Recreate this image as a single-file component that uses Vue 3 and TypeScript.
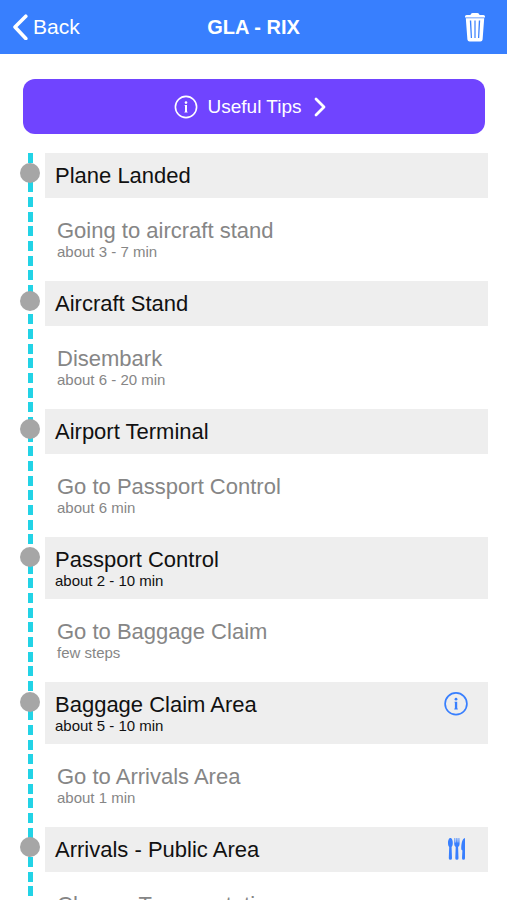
<script setup lang="ts">
interface Step {
  place: string
  wait?: string
  action?: 'info' | 'food'
  next: string
  duration: string
}

const steps: Step[] = [
  { place: 'Plane Landed', next: 'Going to aircraft stand', duration: 'about 3 - 7 min' },
  { place: 'Aircraft Stand', next: 'Disembark', duration: 'about 6 - 20 min' },
  { place: 'Airport Terminal', next: 'Go to Passport Control', duration: 'about 6 min' },
  { place: 'Passport Control', wait: 'about 2 - 10 min', next: 'Go to Baggage Claim', duration: 'few steps' },
  { place: 'Baggage Claim Area', wait: 'about 5 - 10 min', action: 'info', next: 'Go to Arrivals Area', duration: 'about 1 min' },
  { place: 'Arrivals - Public Area', action: 'food', next: 'Choose Transportation', duration: '' },
]
</script>

<template>
  <div class="screen">
    <header class="bar">
      <button class="back" type="button">
        <svg width="16" height="26" viewBox="0 0 16 26" aria-hidden="true">
          <path d="M13.8 2.2 L3 13 L13.8 24.6" fill="none" stroke="currentColor" stroke-width="3.6" stroke-linecap="round" stroke-linejoin="round" />
        </svg>
        <span>Back</span>
      </button>
      <h1>GLA - RIX</h1>
      <button class="trash" type="button" aria-label="Delete">
        <svg width="22" height="30" viewBox="0 0 22 30" aria-hidden="true">
          <path d="M1 4.6 Q1 3 2.6 3 H6.4 Q7 1 8.6 1 H13.4 Q15 1 15.6 3 H19.4 Q21 3 21 4.6 V5.4 H1 Z" fill="currentColor" />
          <path fill-rule="evenodd" fill="currentColor" d="M1.8 6.2 H20.2 L18.6 27.6 Q18.4 29.6 16.4 29.6 H5.6 Q3.6 29.6 3.4 27.6 Z M5.8 8.4 L6.8 26 H8 L7.2 8.4 Z M10.4 8.4 V26 H11.6 V8.4 Z M14.8 8.4 L14 26 H15.2 L16.2 8.4 Z" />
        </svg>
      </button>
    </header>

    <main class="content">
      <button class="tips" type="button">
        <svg width="24" height="24" viewBox="0 0 24 24" aria-hidden="true">
          <circle cx="12" cy="12" r="10.6" fill="none" stroke="currentColor" stroke-width="1.6" />
          <circle cx="12" cy="7.6" r="1.3" fill="currentColor" />
          <path d="M10.6 10 H13 V16.8 H13.6 V17.6 H10.4 V16.8 H11 V10.8 H10.6 Z" fill="currentColor" />
        </svg>
        <span class="tips-label">Useful Tips</span>
        <svg width="12" height="20" viewBox="0 0 12 20" aria-hidden="true">
          <path d="M2 2 L10 10 L2 18" fill="none" stroke="currentColor" stroke-width="2.8" stroke-linecap="round" stroke-linejoin="round" />
        </svg>
      </button>

      <ol class="timeline">
        <li v-for="step in steps" :key="step.place" class="step">
          <section class="place">
            <div>
              <h2>{{ step.place }}</h2>
              <p v-if="step.wait">{{ step.wait }}</p>
            </div>
            <button v-if="step.action === 'info'" class="action" type="button" aria-label="Information">
              <svg width="24" height="24" viewBox="0 0 24 24" aria-hidden="true">
                <circle cx="12" cy="11.8" r="10.9" fill="none" stroke="currentColor" stroke-width="1.7" />
                <circle cx="12" cy="7.2" r="1.4" fill="currentColor" />
                <path d="M10.5 9.8 H13.2 V16.6 H13.8 V17.4 H10.3 V16.6 H10.9 V10.6 H10.5 Z" fill="currentColor" />
              </svg>
            </button>
            <button v-else-if="step.action === 'food'" class="action" type="button" aria-label="Restaurants">
              <svg width="24" height="24" viewBox="0 0 24 24" aria-hidden="true">
                <g fill="currentColor">
                  <path d="M6.4 1 C8.1 1 8.8 3.8 8.8 6 C8.8 8 8.3 9.2 7.6 9.9 L8 21.2 Q8 22.8 6.4 22.8 Q4.8 22.8 4.8 21.2 L5.2 9.9 C4.5 9.2 4 8 4 6 C4 3.8 4.7 1 6.4 1 Z" />
                  <path d="M10.5 1 H11.2 L11.5 5.6 H12.1 L12.5 1 H13.3 L13.7 5.6 H14.3 L14.6 1 H15.3 L15.6 7 Q15.6 9 14.1 10 L14.5 21.2 Q14.5 22.8 12.9 22.8 Q11.3 22.8 11.3 21.2 L11.7 10 Q10.2 9 10.2 7 Z" />
                  <path d="M21 1 V21.2 Q21 22.8 19.5 22.8 Q18 22.8 18 21.2 L18.4 13.4 L17.3 12.4 C17.1 7 18 1.8 21 1 Z" />
                </g>
              </svg>
            </button>
          </section>
          <section class="transit">
            <h3>{{ step.next }}</h3>
            <p v-if="step.duration">{{ step.duration }}</p>
          </section>
        </li>
      </ol>
    </main>
  </div>
</template>

<style>
body {
  margin: 0;
  background: #fff;
}
</style>

<style scoped>
.screen {
  display: flex;
  flex-direction: column;
  height: 100vh;
  font-family: "Liberation Sans", Arial, sans-serif;
  color: #111;
}

h1, h2, h3, p, ol {
  margin: 0;
  padding: 0;
  font-weight: 400;
}

button {
  display: flex;
  align-items: center;
  margin: 0;
  padding: 0;
  border: 0;
  background: none;
  color: inherit;
  font: inherit;
  cursor: pointer;
}

svg {
  display: block;
  flex: none;
}

.bar {
  display: grid;
  grid-template-columns: 1fr auto 1fr;
  align-items: center;
  flex: none;
  height: 54px;
  padding: 0 12px;
  background: #387ffe;
  color: #fff;
}

.back {
  justify-self: start;
  gap: 5px;
  font-size: 21px;
  line-height: 24px;
}

.bar h1 {
  font-size: 20px;
  line-height: 24px;
  font-weight: 700;
}

.trash {
  justify-self: end;
  padding-right: 9px;
}

.content {
  flex: 1;
  min-height: 0;
  padding: 25px 0 0;
  overflow-y: auto;
  scrollbar-width: none;
}

.content::-webkit-scrollbar {
  display: none;
}

.tips {
  justify-content: center;
  width: calc(100% - 45px);
  height: 55px;
  margin: 0 22px 0 23px;
  padding-right: 8px;
  border-radius: 12px;
  background: #7044ff;
  color: #fff;
}

.tips-label {
  margin: 0 13px 0 10px;
  font-size: 19px;
  line-height: 24px;
}

/* The dashed track is a 44px tile that holds three 10px dashes. */
.timeline {
  margin: 19px 19px 0 28px;
  padding-left: 17px;
  list-style: none;
  background-image: linear-gradient(
    #22d3e6 0 10px, transparent 10px 15px,
    #22d3e6 15px 25px, transparent 25px 29px,
    #22d3e6 29px 39px, transparent 39px 44px
  );
  background-size: 5px 44px;
  background-repeat: repeat-y;
}

.step {
  position: relative;
}

/* Stop marker, laid over the track. */
.step::before {
  content: "";
  position: absolute;
  top: 10px;
  left: -25px;
  width: 20px;
  height: 20px;
  border-radius: 50%;
  background: #a6a6a6;
}

.place {
  display: flex;
  align-items: flex-start;
  justify-content: space-between;
  padding: 10px 20px 10px 10px;
  background: #eee;
}

.transit {
  min-height: 42px;
  padding: 20px 12px 21px;
  color: #868686;
}

h2, h3 {
  font-size: 22px;
  line-height: 25px;
}

p {
  font-size: 15px;
  line-height: 17px;
}

.action {
  height: 24px;
  color: #387ffe;
}
</style>
